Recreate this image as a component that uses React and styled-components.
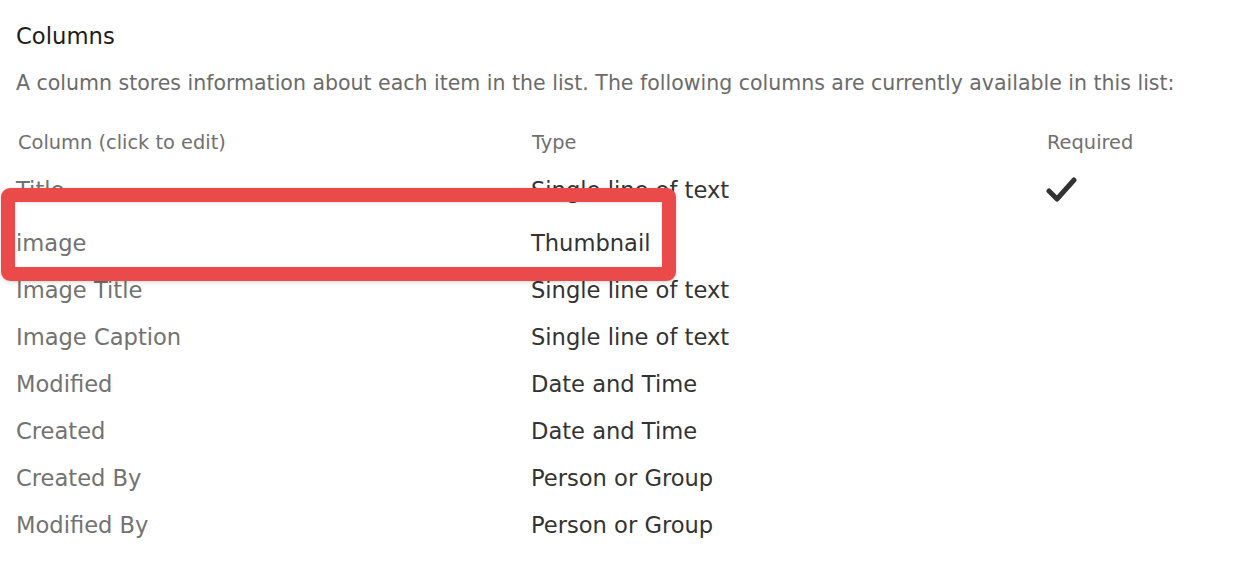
import React from "react";
import styled, { createGlobalStyle } from "styled-components";

const Global = createGlobalStyle`
  html, body { margin: 0; padding: 0; background: #ffffff; }
  body { font-family: "DejaVu Sans", Verdana, sans-serif; }
`;

const Page = styled.div`
  position: relative;
  width: 1238px;
  height: 566px;
  padding: 21px 0 0 16px;
  box-sizing: border-box;
  overflow: hidden;
`;

const Heading = styled.h2`
  margin: 0;
  font-weight: normal;
  font-size: 22.7px;
  line-height: 30px;
  color: #1c1c1c;
`;

const Description = styled.p`
  margin: 17px 0 0 0;
  font-size: 20.5px;
  line-height: 30px;
  color: #6b6b6b;
  white-space: nowrap;
`;

const Table = styled.div`
  margin-top: 21px;
  display: grid;
  grid-template-columns: 515px 516px 1fr;
`;

const HeaderCell = styled.div`
  height: 47px;
  display: flex;
  align-items: center;
  padding-left: ${(p) => p.$indent || 0}px;
  font-size: 19.4px;
  color: #707070;
`;

const Cell = styled.div`
  height: ${(p) => (p.$tall ? 53 : 47)}px;
  box-sizing: border-box;
  padding-top: ${(p) => (p.$tall ? 6 : 0)}px;
  display: flex;
  align-items: center;
  font-size: 22.6px;
  color: ${(p) => (p.$dark ? "#333333" : "#727272")};
  white-space: nowrap;
`;

const CheckWrap = styled.div`
  height: ${(p) => (p.$tall ? 53 : 47)}px;
  display: flex;
  align-items: center;
`;

const Highlight = styled.div`
  position: absolute;
  left: 1px;
  top: 188px;
  width: 675px;
  height: 93px;
  box-sizing: border-box;
  border: 14px solid #ea4a4a;
  border-radius: 9px;
  box-shadow: 0 1px 4px rgba(0, 0, 0, 0.18), inset 0 1px 3px rgba(0, 0, 0, 0.12);
  pointer-events: none;
`;

const Check = () => (
  <svg width="32" height="30" viewBox="0 0 32 30" style={{ marginLeft: -1 }}>
    <polyline
      points="3,16 11,24 28,5"
      fill="none"
      stroke="#333"
      strokeWidth="5"
      strokeLinecap="round"
      strokeLinejoin="round"
    />
  </svg>
);

const rows = [
  { name: "Title", type: "Single line of text", required: true },
  { name: "image", type: "Thumbnail", tall: true },
  { name: "Image Title", type: "Single line of text" },
  { name: "Image Caption", type: "Single line of text" },
  { name: "Modified", type: "Date and Time" },
  { name: "Created", type: "Date and Time" },
  { name: "Created By", type: "Person or Group" },
  { name: "Modified By", type: "Person or Group" },
];

export default function App() {
  return (
    <>
      <Global />
      <Page>
        <Heading>Columns</Heading>
        <Description>
          A column stores information about each item in the list. The following columns are currently available in this list:
        </Description>
        <Table>
          <HeaderCell $indent={2}>Column (click to edit)</HeaderCell>
          <HeaderCell $indent={1}>Type</HeaderCell>
          <HeaderCell>Required</HeaderCell>
          {rows.map((r) => (
            <React.Fragment key={r.name}>
              <Cell $tall={r.tall}>{r.name}</Cell>
              <Cell $tall={r.tall} $dark>{r.type}</Cell>
              <CheckWrap $tall={r.tall}>{r.required ? <Check /> : null}</CheckWrap>
            </React.Fragment>
          ))}
        </Table>
        <Highlight />
      </Page>
    </>
  );
}
